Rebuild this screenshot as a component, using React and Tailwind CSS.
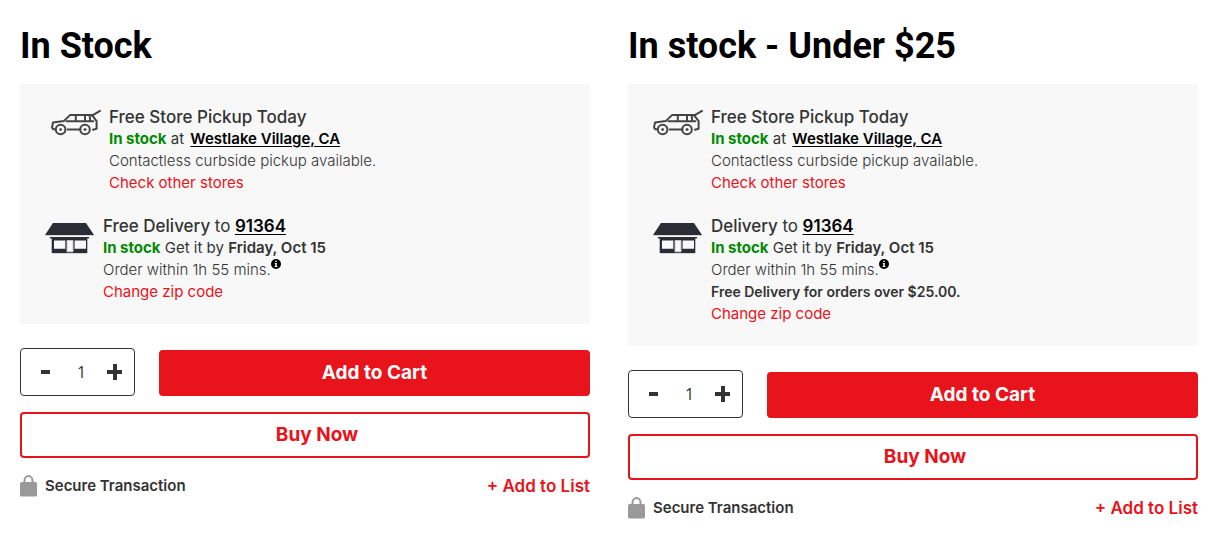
import React, { useState } from 'react';

const CarIcon = () => (
    <svg viewBox="0 0 50 26" className="w-[50px] h-[26px] shrink-0 mt-1" fill="none" stroke="#444444" strokeWidth="2" strokeLinecap="round" strokeLinejoin="round" aria-hidden="true">
        <path d="M3.8 19.3H2.4L1 17.6l1-5.2 10.8-1.3 6.4-6.2h22.6" />
        <path d="M15.5 11.3h26.8M24.8 5v6.2M34 5v6.2M38.6 5.2l.6 6" />
        <path d="M41 5.6 49 .9M41.4 5.6l4.2 5.6v7.6l-3.6 1M16.6 19.5h12.8" />
        <circle cx="9.6" cy="19.5" r="4.8" />
        <circle cx="34" cy="19.5" r="4.8" />
        <circle cx="9.6" cy="19.5" r="1" fill="#444444" strokeWidth="1" />
        <circle cx="34" cy="19.5" r="1" fill="#444444" strokeWidth="1" />
    </svg>
);

const HouseIcon = () => (
    <svg viewBox="0 0 50 31" className="w-[50px] h-[31px] shrink-0 mt-2" aria-hidden="true">
        <path d="M8 0h33l8 12H0z" fill="#2b2d36" />
        <path d="M0 12h49v1H0z" fill="#d4d4d6" />
        <path d="M5 14h39v1.6h-1.7V30H6.7V15.6H5z" fill="#2b2d36" />
        <path d="M9 17.5h11.3v8.2H9zM29.6 17.5H41v8.2H29.6z" fill="#f8f8f8" />
        <path d="M22 17.5h6v11.3h-6z" fill="#f8f8f8" stroke="#c8c8cb" strokeWidth="1" />
        <path d="M6.7 30.5h35.6" stroke="#d4d4d6" />
    </svg>
);

const LockIcon = () => (
    <svg viewBox="0 0 17 22" className="w-[17px] h-[22px]" aria-hidden="true">
        <path d="M4.5 9V5.5a4 4.5 0 0 1 8 0V9" fill="none" stroke="#999999" strokeWidth="2" />
        <rect x="0" y="7" width="17" height="14.5" rx="1.5" fill="#999999" />
    </svg>
);

const InfoIcon = () => (
    <svg viewBox="0 0 10 10" className="inline-block w-[10px] h-[10px] align-super" aria-hidden="true">
        <circle cx="5" cy="5" r="5" fill="#000000" />
        <path d="M4.3 1.8h1.5v1.3H4.3zM3.8 4h2v3.1h.6V8H3.7v-.9h.6V4.9h-.5z" fill="#ffffff" />
    </svg>
);

const InStock = () => <span className="font-bold text-[#008a00]">In stock</span>;

const ProductOptions = ({ title, deliveryLabel, note, pickupClass }) => {
    const [quantity, setQuantity] = useState(1);

    return (
        <section>
            <h1 className="font-[Roboto,sans-serif] text-4xl leading-[44px] font-bold text-black mb-4">{title}</h1>

            <div className="bg-[#f8f8f8] pt-[22px] pb-[21px] flex flex-col gap-[21px] text-[15px] leading-[22px]">
                <div className={`flex gap-2 ${pickupClass}`}>
                    <CarIcon />
                    <div>
                        <h2 className="text-[17px] leading-[22px] font-medium">Free Store Pickup Today</h2>
                        <p>
                            <InStock /> at{' '}
                            <a href="#store" className="ml-[2px] font-semibold text-black underline underline-offset-2">Westlake Village, CA</a>
                        </p>
                        <p className="font-light">Contactless curbside pickup available.</p>
                        <a href="#stores" className="block text-[#e8131b]">Check other stores</a>
                    </div>
                </div>

                <div className="flex gap-2 pl-[25px]">
                    <HouseIcon />
                    <div>
                        <h2 className="text-[17px] leading-[22px] font-medium">
                            {deliveryLabel} <span className="font-normal">to</span>{' '}
                            <a href="#zip" className="font-semibold text-black underline underline-offset-2">91364</a>
                        </h2>
                        <p>
                            <InStock /> Get it by <span className="font-semibold">Friday, Oct 15</span>
                        </p>
                        <p className="h-[22px] font-light">
                            Order within 1h 55 mins.<InfoIcon />
                        </p>
                        {note && <p className="text-sm leading-[22px] font-semibold">{note}</p>}
                        <a href="#change-zip" className="block text-[#e8131b]">Change zip code</a>
                    </div>
                </div>
            </div>

            <div className="mt-6 flex items-end gap-6">
                <div className="w-[115px] h-12 flex items-center justify-between px-2 border border-[#333333] rounded-sm">
                    <button
                        type="button"
                        aria-label="Decrease quantity"
                        onClick={() => setQuantity(Math.max(1, quantity - 1))}
                        className="w-8 h-8 flex items-center justify-center"
                    >
                        <svg viewBox="0 0 9 4" className="w-[9px] h-1"><path d="M0 0h9v4H0z" fill="#333333" /></svg>
                    </button>
                    <input
                        type="text"
                        aria-label="Quantity"
                        value={quantity}
                        onChange={(e) => setQuantity(Number(e.target.value) || 1)}
                        className="w-6 min-w-0 text-center text-base font-[Open_Sans,sans-serif] outline-none"
                    />
                    <button
                        type="button"
                        aria-label="Increase quantity"
                        onClick={() => setQuantity(quantity + 1)}
                        className="w-6 h-8 flex items-center justify-center"
                    >
                        <svg viewBox="0 0 15 16" className="w-[15px] h-4"><path d="M6 0h4v6h5v4h-5v6H6v-6H0V6h6z" fill="#333333" /></svg>
                    </button>
                </div>
                <button type="button" className="flex-1 h-[46px] rounded bg-[#e8131b] text-white text-[19px] font-bold">
                    Add to Cart
                </button>
            </div>

            <button type="button" className="mt-4 w-full h-[46px] pl-6 rounded border-2 border-[#e8131b] bg-white text-[#e8131b] text-[19px] font-bold">
                Buy Now
            </button>

            <div className="mt-4 flex items-center justify-between">
                <div className="flex items-center gap-2 text-[15px] font-semibold">
                    <LockIcon />
                    Secure Transaction
                </div>
                <a href="#list" className="text-[17px] leading-6 font-semibold text-[#e8131b]">+ Add to List</a>
            </div>
        </section>
    );
};

const App = () => {
    return (
        <main className="bg-white px-5 pt-6 pb-4 grid grid-cols-2 gap-[38px] items-start text-[#333333] font-[Inter,sans-serif]">
            <ProductOptions title="In Stock" deliveryLabel="Free Delivery" pickupClass="pl-[31px]" />
            <ProductOptions
                title="In stock - Under $25"
                deliveryLabel="Delivery"
                note="Free Delivery for orders over $25.00."
                pickupClass="pl-[25px]"
            />
        </main>
    );
};

export default App;
